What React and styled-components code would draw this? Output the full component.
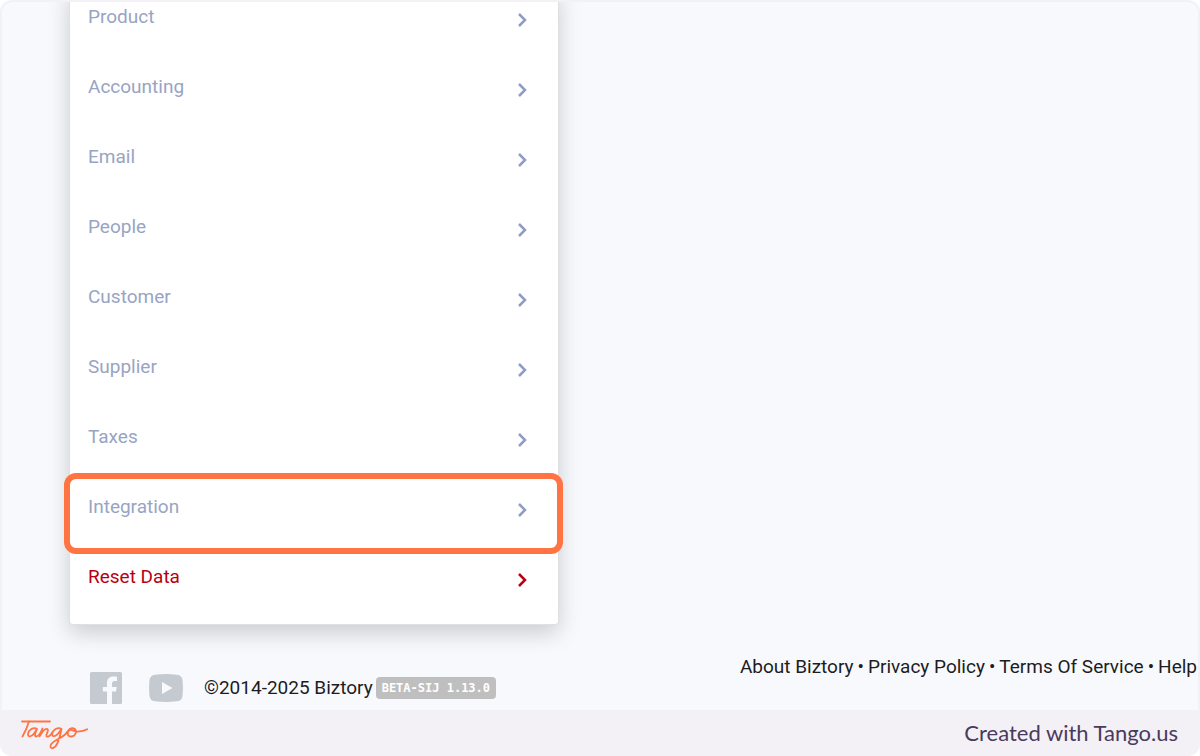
import React from 'react';
import styled, { createGlobalStyle } from 'styled-components';

const GlobalStyle = createGlobalStyle`
  *, *::before, *::after { box-sizing: border-box; }
  body { margin: 0; background: #fff; font-family: Roboto, "Liberation Sans", sans-serif; font-size: 19px; line-height: 24px; }
`;

const Frame = styled.div`
  min-height: 100vh; display: flex; flex-direction: column;
  background: #f3f0f6; border-radius: 12px; overflow: hidden;
`;
const Screen = styled.div`
  flex: 1; display: flex; flex-direction: column; margin: 2px 2px 0;
  background: #f8f9fd; border-radius: 10px 10px 0 0; overflow: hidden;
`;
const Card = styled.nav`
  width: 41%; min-width: 320px; margin: -14px 0 0 67px; padding-bottom: 6px;
  background: #fff; border: 1px solid #dfe0e2; border-top: 0; border-radius: 0 0 4px 4px;
  box-shadow: 0 8px 22px rgba(0,0,0,0.18);
`;
const List = styled.ul`list-style: none; margin: 0; padding: 0;`;
const Item = styled.li`position: relative;`;
const RowLink = styled.a`
  display: flex; justify-content: space-between; align-items: flex-start;
  height: 70px; padding: 17px 29px 0 18px; text-decoration: none;
  color: ${p => p.$danger ? '#b80012' : '#98a4c3'};
`;
const Chevron = styled.svg`width: 12px; height: 16px; margin-top: 7px; color: ${p => p.$danger ? '#b80012' : '#8f9dc6'};`;
const Highlight = styled.span`
  position: absolute; inset: -5px -5px -6px -6px; border: 6px solid #ff7442;
  border-radius: 12px; pointer-events: none;
`;

const Footer = styled.footer`
  display: flex; justify-content: space-between; align-items: flex-start;
  margin-top: auto; padding: 29px 0 6px 88px; color: #1c1c22;
`;
const Brand = styled.div`display: flex; align-items: center; padding-top: 17px;`;
const Social = styled.a`display: flex; margin-right: ${p => p.$gap}px; color: #c5c9d0;`;
const Badge = styled.span`
  margin-left: 3px; padding: 0 6px; border-radius: 4px; background: #bfbfbf; color: #fff;
  font: bold 12px/22px "DejaVu Sans Mono", "Liberation Mono", monospace;
`;
const Links = styled.div`display: flex; gap: 4px; padding-right: 1px; white-space: nowrap;`;
const FooterLink = styled.a`color: inherit; text-decoration: none;`;

const CreditBar = styled.div`
  display: flex; justify-content: space-between; align-items: center;
  height: 46px; padding: 0 22px 0 20px;
`;
const Credit = styled.span`font-family: Lato, sans-serif; font-size: 22px; color: #4a3a5c;`;

const sections = [
  { label: 'Product' },
  { label: 'Accounting' },
  { label: 'Email' },
  { label: 'People' },
  { label: 'Customer' },
  { label: 'Supplier' },
  { label: 'Taxes' },
  { label: 'Integration', active: true },
  { label: 'Reset Data', danger: true },
];

const footerLinks = ['About Biztory', 'Privacy Policy', 'Terms Of Service', 'Help'];

const Facebook = () => (
  <svg width="32" height="32" viewBox="0 0 32 32" fill="currentColor" aria-hidden="true">
    <path d="M1.500 0H30.500Q32 0 32 1.500V30.500Q32 32 30.500 32H22V19.500h4l.7-4.500H22v-3.500c0-1.600.8-2.500 2.500-2.500H27V4.700c-1-.2-2.300-.2-3.700-.2-4 0-6.300 2.300-6.300 6.300V15h-4.200v4.500H17V32H1.500Q0 32 0 30.500V1.500Q0 0 1.500 0Z" />
  </svg>
);

const Youtube = () => (
  <svg width="34" height="28" viewBox="0 0 34 28" aria-hidden="true">
    <path fill="currentColor" d="M6 .8Q17-.6 28 .8q5 .5 5.500 5.500.8 7.700 0 15.400-.5 5-5.500 5.500-11 1.400-22 0-5-.5-5.500-5.500-.8-7.700 0-15.400Q1 1.300 6 .8Z" />
    <path fill="#f8f9fd" d="M13 8v12l10.500-6Z" />
  </svg>
);

const TangoLogo = () => (
  <svg width="70" height="34" viewBox="0 0 70 34" role="img" aria-label="Tango" fill="none" stroke="#ff7442" strokeWidth="1.800" strokeLinecap="round" strokeLinejoin="round">
    <path d="M2 5.500H30" />
    <path d="M9 5.500C7.500 10.500 5 16 2.500 20.500" />
    <path d="M17 13C13.500 10.500 8.500 14 8 18c-.2 3.500 3.500 3 6-.5l3-4.500c-1.500 3-3 7-1 7.500 2 .3 4.500-3.500 6.500-8l-3 8c2.500-4.500 6-8.500 8-7.500 2 1-2.500 6.500-.8 7.500 1.600.8 4-1.500 5.600-4" />
    <path d="M41.500 13c-3.500-2.500-9 1-9.300 5-.2 3.500 3.800 2.500 6-.5l3.300-4.500c-1 5-2.500 11-4.500 15-2 4-5.500 5.500-6.500 3-1-3.500 4.500-6.500 9.500-9 4-2 6.500-4.500 8-7 1.700-2.700 4.500-3.300 6.500-2.200 3 2 1 7.200-3 7.700-3.500.3-4.800-3-2.800-5.700 2-2.500 4 .5 8 .7 4 .2 7-.2 10.500-2.200" />
  </svg>
);

const App = () => (
  <>
    <GlobalStyle />
    <Frame>
      <Screen>
        <Card aria-label="Settings">
          <List>
            {sections.map(s => (
              <Item key={s.label}>
                <RowLink href="#" $danger={s.danger}>
                  {s.label}
                  <Chevron $danger={s.danger} viewBox="0 0 12 16" fill="none" stroke="currentColor" strokeWidth="2.500" aria-hidden="true">
                    <path d="M2 2 8 8l-6 6" />
                  </Chevron>
                </RowLink>
                {s.active && <Highlight />}
              </Item>
            ))}
          </List>
        </Card>
        <Footer>
          <Brand>
            <Social href="#" aria-label="Facebook" $gap={27}><Facebook /></Social>
            <Social href="#" aria-label="YouTube" $gap={21}><Youtube /></Social>
            <span>©2014-2025 Biztory</span>
            <Badge>BETA-SIJ 1.13.0</Badge>
          </Brand>
          <Links>
            {footerLinks.map((label, i) => (
              <React.Fragment key={label}>
                {i > 0 && <span>•</span>}
                <FooterLink href="#">{label}</FooterLink>
              </React.Fragment>
            ))}
          </Links>
        </Footer>
      </Screen>
      <CreditBar>
        <TangoLogo />
        <Credit>Created with Tango.us</Credit>
      </CreditBar>
    </Frame>
  </>
);

export default App;
